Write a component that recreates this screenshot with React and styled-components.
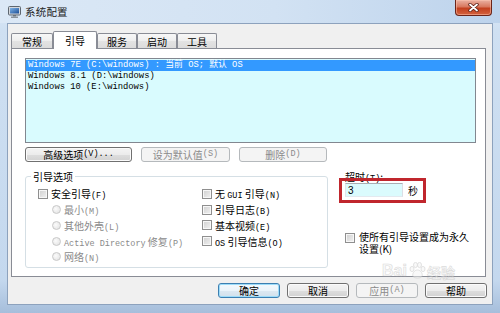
import React from "react";
import styled, { createGlobalStyle } from "styled-components";

const GlobalStyle = createGlobalStyle`
  html, body {
    margin: 0;
    padding: 0;
  }
  body {
    width: 500px;
    height: 313px;
    overflow: hidden;
    background: #c6d9ee;
  }
`;

const Window = styled.div`
  position: relative;
  width: 500px;
  height: 313px;
  display: flex;
  flex-direction: column;
  overflow: hidden;
  background: linear-gradient(to bottom, #dce9f6 0, #cfe0f2 30px, #c4d8ee 280px, #a6bedb 313px);
  font-family: "Noto Sans CJK SC", sans-serif;
  font-size: 10px;
  color: #000;
`;

const TitleBar = styled.div`
  height: 23px;
  flex: none;
  display: flex;
  align-items: center;
  gap: 4px;
  padding-left: 8px;
  background: linear-gradient(to right, #dbe8f6, #d2e2f3 55%, #bdd3ec);
`;

const TitleText = styled.span`
  font-size: 10.5px;
  color: #1b1b1b;
  letter-spacing: 0.2px;
`;

const CloseButton = styled.div`
  align-self: flex-start;
  margin: 0 8px 0 auto;
  width: 37px;
  height: 16px;
  box-sizing: border-box;
  border: 1px solid #6b2419;
  border-top: none;
  border-radius: 0 0 4px 4px;
  background: linear-gradient(#eab1a2, #d8785f 45%, #c3401f 55%, #d4633f);
  box-shadow: inset 0 0 0 1px rgba(255, 200, 180, 0.5);
  display: flex;
  align-items: center;
  justify-content: center;
`;

const Client = styled.div`
  flex: 1;
  margin: 0 7px 8px;
  border: 1px solid #8da2bd;
  background: #f0f0f0;
  display: flex;
  flex-direction: column;
`;

const TabStrip = styled.div`
  position: relative;
  z-index: 1;
  height: 24px;
  flex: none;
  display: flex;
  align-items: flex-end;
  padding-left: 3px;
`;

const Tab = styled.div`
  width: ${p => p.$width}px;
  height: ${p => (p.$active ? 18 : 15)}px;
  margin-bottom: ${p => (p.$active ? -1 : 0)}px;
  box-sizing: border-box;
  border: 1px solid #898c95;
  border-bottom: none;
  border-radius: 2px 2px 0 0;
  background: ${p => (p.$active ? "#fff" : "linear-gradient(#f7f7f7, #eeeeee 50%, #e3e3e3 50%, #dcdcdc)")};
  display: flex;
  align-items: center;
  justify-content: center;
  padding-top: ${p => (p.$active ? 0 : 1)}px;
  font-size: 10px;
`;

const Panel = styled.div`
  flex: 1;
  margin: 0 6px 0 3px;
  border: 1px solid #898c95;
  background: #fff;
  padding: 9px 9px 0 13px;
  display: flex;
  flex-direction: column;
`;

const ListBox = styled.div`
  height: 85px;
  box-sizing: border-box;
  border: 1px solid #828790;
  background: #d9fbfe;
  padding: 1px 0;
`;

const EntryRow = styled.div`
  height: 11px;
  line-height: 11px;
  padding-left: 2px;
  background: ${p => (p.$selected ? "#3399ff" : "transparent")};
  color: ${p => (p.$selected ? "#fff" : "#000")};
  font-family: "Liberation Mono", "Noto Sans CJK SC", monospace;
  font-size: 8.8px;
  white-space: nowrap;
`;

const ButtonRow = styled.div`
  display: flex;
  gap: ${p => p.$gap}px;
  justify-content: ${p => (p.$end ? "flex-end" : "flex-start")};
  margin-top: ${p => p.$top}px;
  padding-right: ${p => p.$right || 0}px;
`;

const Button = styled.button`
  width: ${p => p.$width}px;
  height: 15px;
  box-sizing: border-box;
  padding: 0;
  font-family: inherit;
  font-size: 10px;
  line-height: 13px;
  white-space: nowrap;
  color: ${p => (p.disabled ? "#8a8a8a" : "#000")};
  border: 1px solid ${p => (p.$default ? "#3c7fb1" : p.disabled ? "#b5b9bc" : "#707070")};
  border-radius: 3px;
  background: ${p =>
    p.disabled
      ? "#f4f4f4"
      : p.$default
      ? "linear-gradient(#f3f9fd, #ebf4fa 50%, #dde9f2 50%, #d3e1ec)"
      : "linear-gradient(#f4f4f4, #ececec 50%, #dedede 50%, #d2d2d2)"};
  box-shadow: ${p =>
    p.$default ? "inset 0 0 0 1px #9ddcf9" : p.disabled ? "none" : "inset 0 0 0 1px #fbfbfb"};
  display: flex;
  align-items: center;
  justify-content: center;
`;

const Latin = styled.span`
  font-family: "Liberation Mono", monospace;
  font-size: 8.5px;
`;

const Lower = styled.div`
  display: grid;
  grid-template-columns: 303px 1fr;
  column-gap: 11px;
  margin-top: 14px;
`;

const GroupBox = styled.div`
  height: 92px;
  box-sizing: border-box;
  border: 1px solid #d5dfe5;
  border-radius: 3px;
  padding-left: 12px;
`;

const Legend = styled.div`
  width: fit-content;
  margin: -7px 0 0 -7px;
  padding: 0 2px;
  background: #fff;
  line-height: 13px;
  font-size: 10px;
`;

const OptionColumns = styled.div`
  display: grid;
  grid-template-columns: 164px 1fr;
  margin-top: 3px;
`;

const OptionColumn = styled.div`
  display: flex;
  flex-direction: column;
`;

const OptionRow = styled.div`
  height: 15.75px;
  display: flex;
  align-items: center;
  gap: 3px;
  padding-left: ${p => (p.$indent ? 14 : 0)}px;
  color: ${p => (p.$disabled ? "#8a8a8a" : "#000")};
  white-space: nowrap;
`;

const CheckBox = styled.span`
  flex: none;
  width: 10px;
  height: 10px;
  box-sizing: border-box;
  border: 1px solid #8f8f8f;
  background: linear-gradient(135deg, #cfcfcf, #f2f2f2);
  box-shadow: inset 0 0 0 1px #f7f7f7;
  margin-top: ${p => p.$top || 0}px;
`;

const Radio = styled.span`
  flex: none;
  width: 9px;
  height: 9px;
  box-sizing: border-box;
  border: 1px solid #c8c8c8;
  border-radius: 50%;
  background: radial-gradient(circle at 40% 40%, #fbfbfb, #e0e0e0);
`;

const SideColumn = styled.div`
  display: flex;
  flex-direction: column;
  padding-left: 6px;
`;

const TimeoutLabel = styled.div`
  margin-top: -5px;
  height: 12px;
  line-height: 12px;
`;

const TimeoutField = styled.div`
  position: relative;
  display: flex;
  align-items: center;
  gap: 5px;
  height: 14px;
`;

const TimeoutInput = styled.input`
  width: 58px;
  height: 14px;
  box-sizing: border-box;
  margin: 0;
  padding: 0 0 0 2px;
  border: 1px solid;
  border-color: #abadb3 #dbdfe6 #e3e9ef #e2e3ea;
  background: #dafbfd;
  font-family: "Liberation Sans", sans-serif;
  font-size: 10px;
  line-height: 12px;
  color: #000;
  outline: none;
`;

const RedFrame = styled.div`
  position: absolute;
  left: -6px;
  top: -5px;
  width: 87px;
  height: 25px;
  box-sizing: border-box;
  border: 3px solid #c0262d;
  pointer-events: none;
`;

const PermanentRow = styled.div`
  display: flex;
  align-items: flex-start;
  gap: 4px;
  margin-top: 34px;
`;

const PermanentText = styled.div`
  width: 112px;
  line-height: 12px;
`;

const Footer = styled.div`
  height: 27px;
  flex: none;
  box-sizing: border-box;
  padding-top: 6px;
`;

const Watermark = styled.div`
  position: absolute;
  left: 382px;
  top: 262px;
  display: flex;
  align-items: flex-end;
  gap: 1px;
  opacity: 0.5;
  pointer-events: none;
  color: #f4f4f4;
  -webkit-text-stroke: 0.6px #b9b9b9;
  font-family: "Liberation Sans", sans-serif;
  font-weight: bold;
`;

const WatermarkWord = styled.span`
  font-size: ${p => p.$size}px;
  line-height: 1;
  font-family: ${p => (p.$cjk ? '"Noto Sans CJK SC", sans-serif' : '"Liberation Sans", sans-serif')};
`;

const AppIcon = () => (
  <svg width="13" height="12" viewBox="0 0 13 12">
    <defs>
      <linearGradient id="scr" x1="0" y1="0" x2="1" y2="1">
        <stop offset="0" stopColor="#7fb4e8" />
        <stop offset="1" stopColor="#1d4f97" />
      </linearGradient>
    </defs>
    <rect x="0.5" y="0.5" width="12" height="8.5" rx="1" fill="#d4d8dd" stroke="#5d6670" />
    <rect x="2" y="2" width="9" height="5.5" fill="url(#scr)" />
    <rect x="5" y="9" width="3" height="1.5" fill="#6b737c" />
    <rect x="3" y="10.5" width="7" height="1.5" fill="#8a939c" />
  </svg>
);

const CloseGlyph = () => (
  <svg width="11" height="9" viewBox="0 0 11 9">
    <path d="M2 1.5 L9 7.5 M9 1.5 L2 7.5" stroke="#5a1d14" strokeWidth="3.4" strokeLinecap="round" />
    <path d="M2 1.5 L9 7.5 M9 1.5 L2 7.5" stroke="#fff" strokeWidth="1.8" strokeLinecap="round" />
  </svg>
);

const Paw = () => (
  <svg width="18" height="17" viewBox="0 0 18 17">
    <g fill="#f4f4f4" stroke="#b9b9b9" strokeWidth="0.8">
      <ellipse cx="4" cy="7" rx="2" ry="2.6" />
      <ellipse cx="7.5" cy="3" rx="2" ry="2.6" />
      <ellipse cx="11.5" cy="3" rx="2" ry="2.6" />
      <ellipse cx="15" cy="7" rx="2" ry="2.6" />
      <path d="M9.5 8 C6 8 4 12 5 14.5 C6 16.5 13 16.5 14 14.5 C15 12 13 8 9.5 8 Z" />
    </g>
  </svg>
);

const tabs = [
  { label: "常规", width: 42 },
  { label: "引导", width: 44, active: true },
  { label: "服务", width: 40 },
  { label: "启动", width: 40 },
  { label: "工具", width: 40 },
];

const entries = [
  "Windows 7E (C:\\windows) : 当前 OS; 默认 OS",
  "Windows 8.1 (D:\\windows)",
  "Windows 10 (E:\\windows)",
];

const App = () => {
  return (
    <Window>
      <GlobalStyle />
      <TitleBar>
        <AppIcon />
        <TitleText>系统配置</TitleText>
        <CloseButton>
          <CloseGlyph />
        </CloseButton>
      </TitleBar>

      <Client>
        <TabStrip>
          {tabs.map(t => (
            <Tab key={t.label} $width={t.width} $active={t.active}>
              {t.label}
            </Tab>
          ))}
        </TabStrip>

        <Panel>
          <ListBox>
            {entries.map((e, i) => (
              <EntryRow key={e} $selected={i === 0}>
                {e}
              </EntryRow>
            ))}
          </ListBox>

          <ButtonRow $gap={9} $top={4}>
            <Button $width={107}>
              高级选项<Latin>(V)...</Latin>
            </Button>
            <Button $width={89} disabled>
              设为默认值<Latin>(S)</Latin>
            </Button>
            <Button $width={88} disabled>
              删除<Latin>(D)</Latin>
            </Button>
          </ButtonRow>

          <Lower>
            <GroupBox>
              <Legend>引导选项</Legend>
              <OptionColumns>
                <OptionColumn>
                  <OptionRow>
                    <CheckBox />
                    <span>
                      安全引导<Latin>(F)</Latin>
                    </span>
                  </OptionRow>
                  <OptionRow $indent $disabled>
                    <Radio />
                    <span>
                      最小<Latin>(M)</Latin>
                    </span>
                  </OptionRow>
                  <OptionRow $indent $disabled>
                    <Radio />
                    <span>
                      其他外壳<Latin>(L)</Latin>
                    </span>
                  </OptionRow>
                  <OptionRow $indent $disabled>
                    <Radio />
                    <span>
                      <Latin>Active Directory</Latin> 修复<Latin>(P)</Latin>
                    </span>
                  </OptionRow>
                  <OptionRow $indent $disabled>
                    <Radio />
                    <span>
                      网络<Latin>(N)</Latin>
                    </span>
                  </OptionRow>
                </OptionColumn>
                <OptionColumn>
                  <OptionRow>
                    <CheckBox />
                    <span>
                      无 <Latin>GUI</Latin> 引导<Latin>(N)</Latin>
                    </span>
                  </OptionRow>
                  <OptionRow>
                    <CheckBox />
                    <span>
                      引导日志<Latin>(B)</Latin>
                    </span>
                  </OptionRow>
                  <OptionRow>
                    <CheckBox />
                    <span>
                      基本视频<Latin>(E)</Latin>
                    </span>
                  </OptionRow>
                  <OptionRow>
                    <CheckBox />
                    <span>
                      <Latin>OS</Latin> 引导信息<Latin>(O)</Latin>
                    </span>
                  </OptionRow>
                </OptionColumn>
              </OptionColumns>
            </GroupBox>

            <SideColumn>
              <TimeoutLabel>
                超时<Latin>(T)</Latin>:
              </TimeoutLabel>
              <TimeoutField>
                <TimeoutInput defaultValue="3" readOnly />
                <span>秒</span>
                <RedFrame />
              </TimeoutField>
              <PermanentRow>
                <CheckBox $top={2} />
                <PermanentText>使所有引导设置成为永久设置(K)</PermanentText>
              </PermanentRow>
            </SideColumn>
          </Lower>
        </Panel>

        <Footer>
          <ButtonRow $gap={7} $top={0} $right={5} $end>
            <Button $width={62} $default>
              确定
            </Button>
            <Button $width={62}>取消</Button>
            <Button $width={62} disabled>
              应用<Latin>(A)</Latin>
            </Button>
            <Button $width={62}>帮助</Button>
          </ButtonRow>
        </Footer>
      </Client>

      <Watermark>
        <WatermarkWord $size={16}>Bai</WatermarkWord>
        <Paw />
        <WatermarkWord $size={14} $cjk>
          经验
        </WatermarkWord>
      </Watermark>
    </Window>
  );
};

export default App;
